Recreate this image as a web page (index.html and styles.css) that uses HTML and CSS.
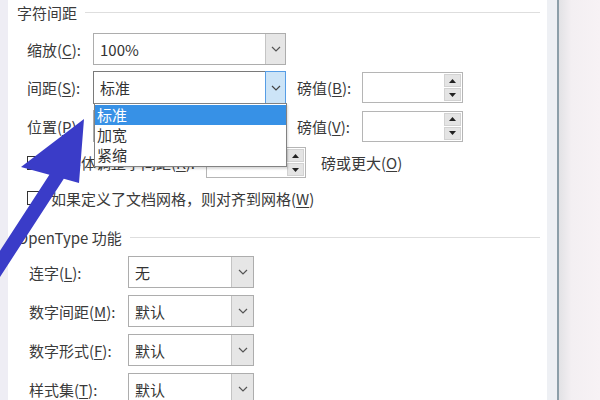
FILE: index.html
```html
<!DOCTYPE html>
<html lang="zh-CN">
<head>
    <meta charset="UTF-8">
    <title>字体 - 高级</title>
    <link rel="stylesheet" href="styles.css">
</head>
<body>

<div class="screen">
    <div class="edge-left"></div>

    <div class="dialog">
        <!-- 字符间距 -->
        <div class="group-title"><span>字符间距</span><i class="rule"></i></div>

        <div class="row r-scale">
            <label class="lbl">缩放(<u>C</u>):</label>
            <div class="combo">
                <span class="val">100%</span>
                <span class="drop"><svg width="10" height="6" viewBox="0 0 10 6"><polyline points="1,1 5,5 9,1" fill="none" stroke="#555" stroke-width="1.2"/></svg></span>
            </div>
        </div>

        <div class="row r-spacing">
            <label class="lbl">间距(<u>S</u>):</label>
            <div class="combo open">
                <span class="val">标准</span>
                <span class="drop"><svg width="10" height="6" viewBox="0 0 10 6"><polyline points="1,1 5,5 9,1" fill="none" stroke="#444" stroke-width="1.2"/></svg></span>
                <ul class="listbox">
                    <li class="sel">标准</li>
                    <li>加宽</li>
                    <li>紧缩</li>
                </ul>
            </div>
            <label class="lbl2">磅值(<u>B</u>):</label>
            <div class="spin">
                <span class="field"></span>
                <span class="btns">
                    <b><svg width="7" height="4" viewBox="0 0 7 4"><polygon points="0,4 3.5,0 7,4" fill="#222"/></svg></b>
                    <b><svg width="7" height="4" viewBox="0 0 7 4"><polygon points="0,0 3.5,4 7,0" fill="#222"/></svg></b>
                </span>
            </div>
        </div>

        <div class="row r-position">
            <label class="lbl">位置(<u>P</u>):</label>
            <!-- covered by the open list above -->
            <div class="combo">
                <span class="val"></span>
                <span class="drop"></span>
            </div>
            <label class="lbl2">磅值(<u>V</u>):</label>
            <div class="spin">
                <span class="field"></span>
                <span class="btns">
                    <b><svg width="7" height="4" viewBox="0 0 7 4"><polygon points="0,4 3.5,0 7,4" fill="#222"/></svg></b>
                    <b><svg width="7" height="4" viewBox="0 0 7 4"><polygon points="0,0 3.5,4 7,0" fill="#222"/></svg></b>
                </span>
            </div>
        </div>

        <div class="row r-kerning">
            <span class="chk"></span>
            <label class="chk-text">为字体调整字间距(<u>K</u>):</label>
            <div class="spin small">
                <span class="field"></span>
                <span class="btns">
                    <b><svg width="7" height="4" viewBox="0 0 7 4"><polygon points="0,4 3.5,0 7,4" fill="#222"/></svg></b>
                    <b><svg width="7" height="4" viewBox="0 0 7 4"><polygon points="0,0 3.5,4 7,0" fill="#222"/></svg></b>
                </span>
            </div>
            <label class="unit">磅或更大(<u>O</u>)</label>
        </div>

        <div class="row r-grid">
            <span class="chk"></span>
            <label class="grid-text">如果定义了文档网格，则对齐到网格(<u>W</u>)</label>
        </div>

        <!-- OpenType 功能 -->
        <div class="group-title second"><span>OpenType 功能</span><i class="rule"></i></div>

        <div class="row r-ot first">
            <label class="lbl wide">连字(<u>L</u>):</label>
            <div class="combo narrow">
                <span class="val">无</span>
                <span class="drop"><svg width="10" height="6" viewBox="0 0 10 6"><polyline points="1,1 5,5 9,1" fill="none" stroke="#555" stroke-width="1.2"/></svg></span>
            </div>
        </div>
        <div class="row r-ot">
            <label class="lbl wide">数字间距(<u>M</u>):</label>
            <div class="combo narrow">
                <span class="val">默认</span>
                <span class="drop"><svg width="10" height="6" viewBox="0 0 10 6"><polyline points="1,1 5,5 9,1" fill="none" stroke="#555" stroke-width="1.2"/></svg></span>
            </div>
        </div>
        <div class="row r-ot">
            <label class="lbl wide">数字形式(<u>F</u>):</label>
            <div class="combo narrow">
                <span class="val">默认</span>
                <span class="drop"><svg width="10" height="6" viewBox="0 0 10 6"><polyline points="1,1 5,5 9,1" fill="none" stroke="#555" stroke-width="1.2"/></svg></span>
            </div>
        </div>
        <div class="row r-ot">
            <label class="lbl wide">样式集(<u>T</u>):</label>
            <div class="combo narrow">
                <span class="val">默认</span>
                <span class="drop"><svg width="10" height="6" viewBox="0 0 10 6"><polyline points="1,1 5,5 9,1" fill="none" stroke="#555" stroke-width="1.2"/></svg></span>
            </div>
        </div>
    </div>

    <div class="edge-right"></div>
    <div class="frame-line"></div>
    <div class="backdrop"></div>

    <!-- big blue pointer drawn over the dialog -->
    <svg class="pointer" width="600" height="400" viewBox="0 0 600 400">
        <polygon points="84,119 79,183 63.8,178.8 -34.5,330 -51.5,330 49.4,174.8 21,167" fill="#3a3cc8"/>
    </svg>
</div>

</body>
</html>
```

FILE: styles.css
```css
html, body {
    margin: 0;
    padding: 0;
}
body {
    width: 600px;
    height: 400px;
    overflow: hidden;
    font-family: "Noto Sans CJK SC", "Noto Sans", sans-serif;
    font-size: 15px;
    color: #3a3a3a;
    background: #fff;
}
u {
    text-decoration: underline;
    text-underline-offset: 2px;
}
.screen {
    position: relative;
    display: flex;
    width: 600px;
    height: 400px;
    overflow: hidden;
}
.edge-left {
    width: 8px;
    background: #eeedf4;
}
.dialog {
    width: 539px;
    padding: 0 7px 0 9px;
    box-sizing: border-box;
    background: #fff;
}
.edge-right {
    width: 10px;
    background: #eef0f4;
}
.frame-line {
    width: 2px;
    background: #8d9fa9;
}
.backdrop {
    flex: 1;
    background: linear-gradient(to right, #e2e2e5, #f3eff2 30%, #f7f2f5);
}

/* group headers */
.group-title {
    display: flex;
    align-items: center;
    height: 22px;
    margin-top: 1px;
    line-height: 1;
}
.group-title .rule {
    flex: 1;
    height: 1px;
    margin-left: 8px;
    background: #dedede;
}
.group-title.second {
    margin-top: 17px;
}

/* rows */
.row {
    display: flex;
    align-items: center;
    line-height: 1;
}
.lbl {
    width: 66px;
    padding-left: 10px;
}
.lbl.wide {
    width: 99px;
    padding-left: 12px;
}
.lbl2 {
    width: 65px;
    margin-left: 11px;
}
.r-scale {
    margin-top: 10px;
    height: 32px;
}
.r-spacing {
    margin-top: 6px;
    height: 33px;
}
.r-position {
    margin-top: 6px;
    height: 32px;
}
.r-kerning {
    margin-top: 5px;
    height: 31px;
}
.r-grid {
    margin-top: 9px;
    height: 22px;
}
.r-ot {
    margin-top: 7px;
    height: 32px;
}
.r-ot.first {
    margin-top: 8px;
}

/* combo boxes */
.combo {
    position: relative;
    display: flex;
    width: 193px;
    height: 100%;
    border: 1px solid #adadad;
    box-sizing: border-box;
    background: #fff;
}
.combo.narrow {
    width: 126px;
}
.combo .val {
    flex: 1;
    display: flex;
    align-items: center;
    padding-left: 6px;
    color: #333;
}
.combo .drop {
    display: flex;
    align-items: center;
    justify-content: center;
    width: 19px;
    border-left: 1px solid #c4c4c4;
    background: #e6e6e6;
}
.combo.narrow .drop {
    width: 21px;
}
.combo.open {
    border-color: #7a7a7a;
}
.combo.open .drop {
    background: #cce4f7;
    border: 1px solid #569de5;
    margin: -1px -1px -1px 0;
}

/* dropdown list of 间距 */
.listbox {
    position: absolute;
    top: 100%;
    left: 0;
    z-index: 2;
    width: 193px;
    margin: 0;
    padding: 1px 0;
    list-style: none;
    border: 1px solid #828282;
    box-sizing: border-box;
    background: #fff;
    box-shadow: 1px 2px 2px rgba(0, 0, 0, 0.15);
}
.listbox li {
    height: 20px;
    line-height: 20px;
    padding-left: 2px;
    color: #333;
}
.listbox li.sel {
    background: #3791e6;
    color: #fff;
}

/* spin boxes */
.spin {
    display: flex;
    width: 101px;
    height: 31px;
    border: 1px solid #b5b5b5;
    box-sizing: border-box;
    background: #fff;
}
.spin .field {
    flex: 1;
}
.spin .btns {
    display: flex;
    flex-direction: column;
    gap: 1px;
    width: 19px;
    padding: 1px;
    box-sizing: border-box;
}
.spin .btns b {
    flex: 1;
    display: flex;
    align-items: center;
    justify-content: center;
    background: #e4e4e4;
    border: 1px solid #d2d2d2;
}
.spin.small {
    width: 100px;
    height: 31px;
}

/* check boxes */
.chk {
    width: 12px;
    height: 12px;
    margin-left: 10px;
    border: 1px solid #333;
    background: #fff;
}
.chk-text {
    width: 155px;
    margin-left: 10px;
}
.grid-text {
    margin-left: 10px;
}
.unit {
    margin-left: 15px;
}

.pointer {
    position: absolute;
    left: 0;
    top: 0;
    z-index: 3;
}
```
